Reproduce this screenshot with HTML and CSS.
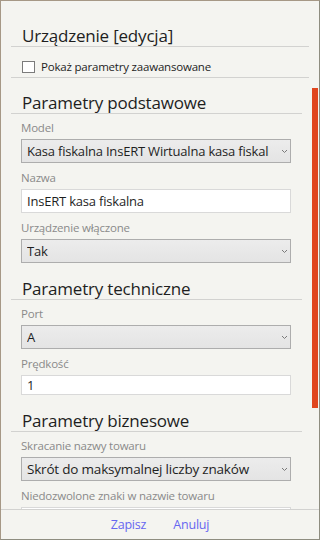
FILE: index.html
```html
<!DOCTYPE html>
<html>
<head>
	<title>Urządzenie [edycja]</title>
	<meta charset="utf8"/>
	<link rel="stylesheet" href="styles.css">
</head>
<body>
	<div class="window">
		<div class="header">
			<h1>Urządzenie [edycja]</h1>
			<label class="advanced"><span class="box"></span>Pokaż parametry zaawansowane</label>
		</div>
		<div class="scroller">
			<div class="body">
				<h2 class="first">Parametry podstawowe</h2>
				<div class="field">
					<div class="caption">Model</div>
					<div class="select">
						<span class="value">Kasa fiskalna InsERT Wirtualna kasa fiskalna</span>
						<svg class="chevron" width="7" height="5" viewBox="0 0 7 5"><path d="M1 1 L3.5 3.5 L6 1" fill="none" stroke="#7a7a7a" stroke-width="1"/></svg>
					</div>
				</div>
				<div class="field">
					<div class="caption">Nazwa</div>
					<div class="input">InsERT kasa fiskalna</div>
				</div>
				<div class="field">
					<div class="caption">Urządzenie włączone</div>
					<div class="select">
						<span class="value">Tak</span>
						<svg class="chevron" width="7" height="5" viewBox="0 0 7 5"><path d="M1 1 L3.5 3.5 L6 1" fill="none" stroke="#7a7a7a" stroke-width="1"/></svg>
					</div>
				</div>

				<h2>Parametry techniczne</h2>
				<div class="field">
					<div class="caption">Port</div>
					<div class="select">
						<span class="value">A</span>
						<svg class="chevron" width="7" height="5" viewBox="0 0 7 5"><path d="M1 1 L3.5 3.5 L6 1" fill="none" stroke="#7a7a7a" stroke-width="1"/></svg>
					</div>
				</div>
				<div class="field">
					<div class="caption">Prędkość</div>
					<div class="input short">1</div>
				</div>

				<h2>Parametry biznesowe</h2>
				<div class="field">
					<div class="caption">Skracanie nazwy towaru</div>
					<div class="select large">
						<span class="value">Skrót do maksymalnej liczby znaków</span>
						<svg class="chevron" width="7" height="5" viewBox="0 0 7 5"><path d="M1 1 L3.5 3.5 L6 1" fill="none" stroke="#7a7a7a" stroke-width="1"/></svg>
					</div>
				</div>
				<div class="field">
					<div class="caption">Niedozwolone znaki w nazwie towaru</div>
					<div class="input"></div>
				</div>
			</div>
			<div class="track"><div class="thumb"></div></div>
		</div>
		<div class="footer">
			<a class="action">Zapisz</a>
			<a class="action">Anuluj</a>
		</div>
	</div>
</body>
</html>
```

FILE: styles.css
```css
html, body {
	margin: 0;
	padding: 0;
}

body {
	font-family: "Open Sans", "Noto Sans", sans-serif;
	color: #1e1e1e;
	background: #f4f4f0;
}

.window {
	box-sizing: border-box;
	width: 320px;
	height: 540px;
	display: flex;
	flex-direction: column;
	border: 1px solid #a69886;
	border-right-color: #8e8d80;
	border-bottom-color: #8e8d80;
	background: #f4f4f0;
	overflow: hidden;
}

.header {
	padding: 0 10px;
}

h1 {
	margin: 0;
	padding: 24px 0 0 11px;
	height: 21px;
	font-size: 17px;
	font-weight: normal;
	line-height: 21px;
	border-bottom: 1px solid #d2d2d0;
	letter-spacing: -0.2px;
}

.advanced {
	display: flex;
	align-items: center;
	height: 31px;
	padding-left: 11px;
	box-sizing: border-box;
	padding-top: 9px;
	font-size: 11.5px;
	letter-spacing: -0.2px;
	border-bottom: 1px solid #d2d2d0;
}

.box {
	box-sizing: border-box;
	width: 13px;
	height: 12px;
	margin-right: 6px;
	border: 1px solid #7b7b7b;
	background: #fff;
}

.scroller {
	flex: 1;
	display: flex;
	min-height: 0;
	overflow: hidden;
}

.body {
	flex: 1;
	min-width: 0;
	padding: 0 10px;
}

h2 {
	margin: 0;
	padding: 15px 0 0 11px;
	height: 21px;
	font-size: 17px;
	font-weight: normal;
	line-height: 21px;
	border-bottom: 1px solid #d2d2d0;
	letter-spacing: -0.2px;
}

h2.first {
	padding-top: 14px;
}

.field {
	padding: 0 11px 0 10px;
}

h2 + .field {
	margin-top: 2px;
}

.field + .field {
	margin-top: 3px;
}

.caption {
	height: 23px;
	padding-top: 4px;
	box-sizing: border-box;
	font-size: 11.5px;
	line-height: 16px;
	color: #8a8a8a;
	letter-spacing: -0.2px;
}

.select,
.input {
	box-sizing: border-box;
	height: 24px;
	display: flex;
	align-items: center;
	padding: 0 5px;
	font-size: 13px;
	letter-spacing: -0.2px;
	white-space: nowrap;
	overflow: hidden;
}

.input.short {
	height: 20px;
}

.select {
	border: 1px solid #adadad;
	background: linear-gradient(#ececec, #e4e4e4);
	padding-right: 2px;
}

.input {
	border: 1px solid #d9d9d9;
	background: #fff;
}

.select .value {
	flex: 1;
	overflow: hidden;
}

.select.large {
	font-size: 13.5px;
}

.chevron {
	flex: none;
	margin-left: 12px;
}

.track {
	width: 6px;
	margin-right: 1px;
	flex: none;
}

.thumb {
	margin-top: 10px;
	height: 320px;
	background: #e0461f;
}

.footer {
	box-sizing: border-box;
	height: 30px;
	flex: none;
	display: flex;
	justify-content: center;
	align-items: center;
	gap: 27px;
	border-top: 1px solid #d2d2d0;
}

.action {
	font-size: 12.5px;
	line-height: 16px;
	color: #6666f0;
	letter-spacing: -0.2px;
}
```
